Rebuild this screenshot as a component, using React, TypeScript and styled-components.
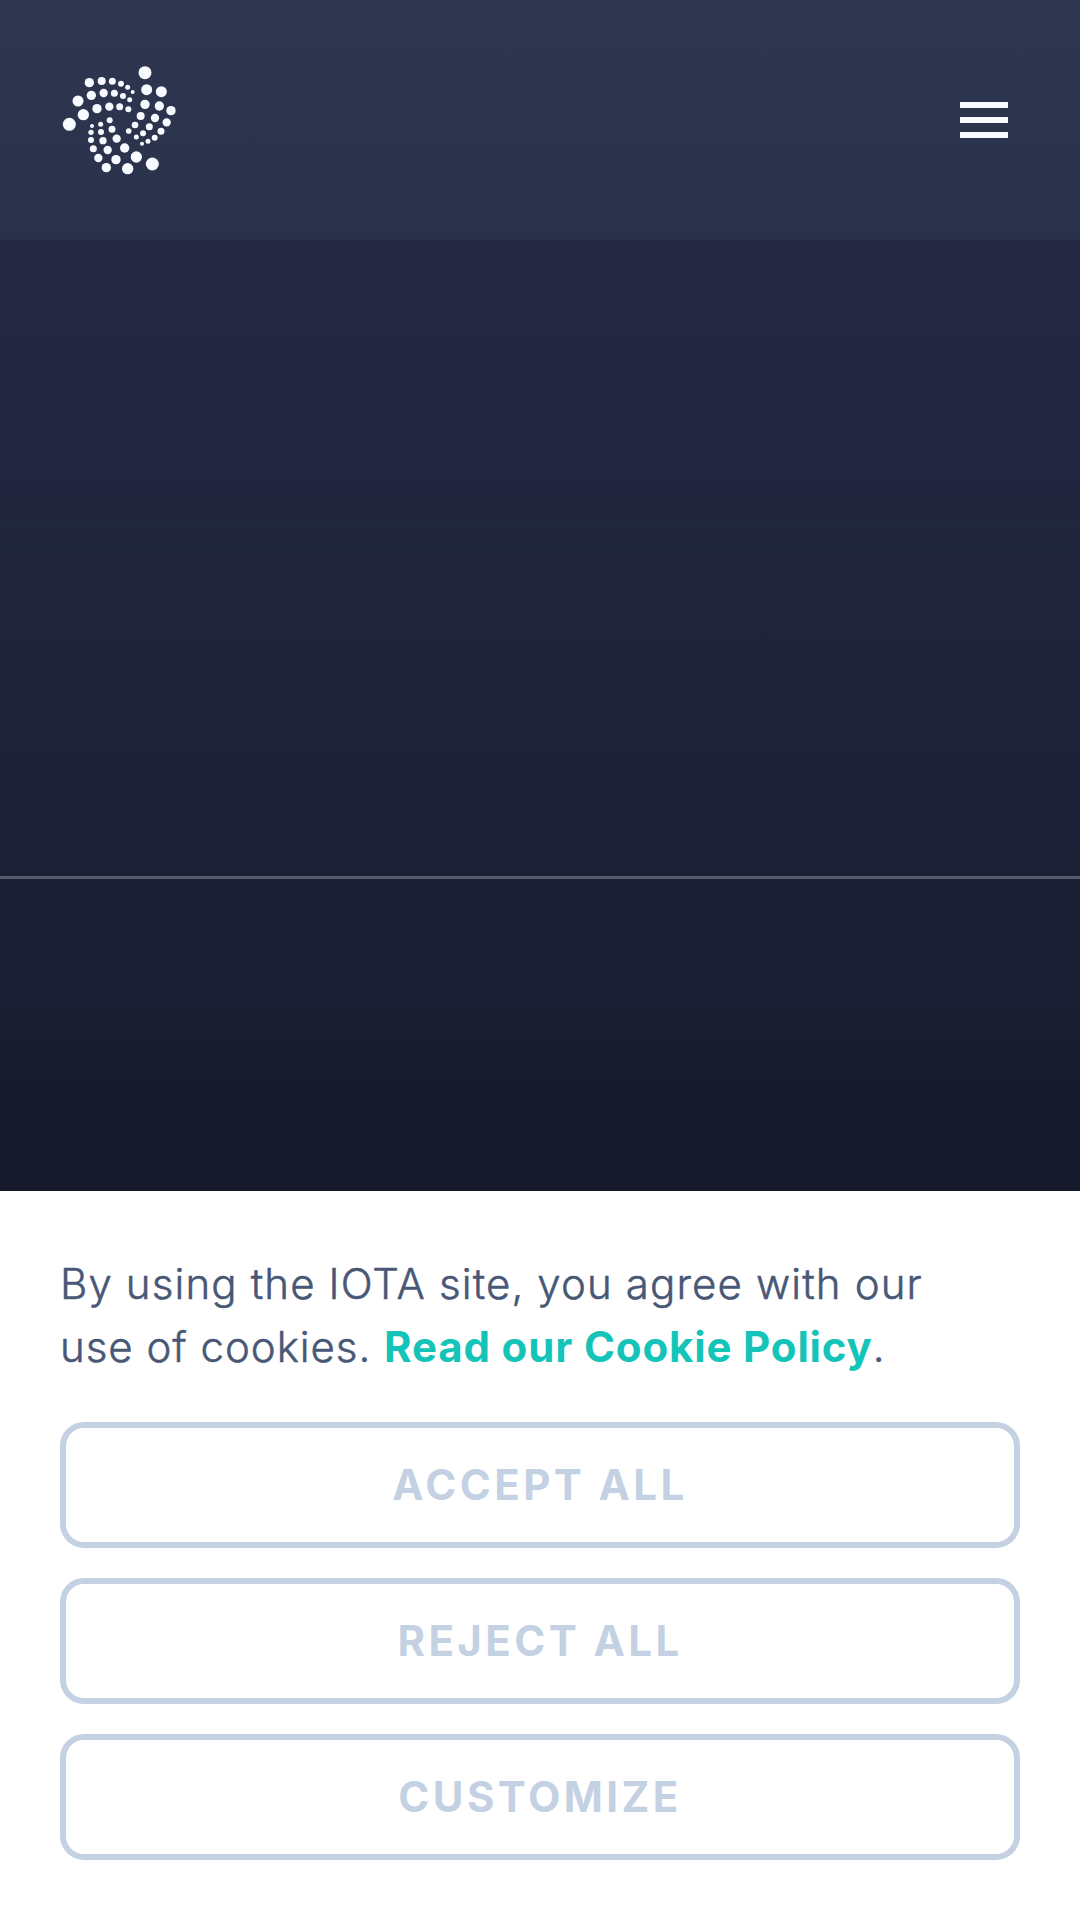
import React from "react";
import styled, { createGlobalStyle } from "styled-components";

const GlobalStyle = createGlobalStyle`
  *, *::before, *::after { box-sizing: border-box; }
  body { margin: 0; background: #fff; }
`;

const Page = styled.div`
  display: flex;
  flex-direction: column;
  width: 1080px;
  height: 1920px;
  overflow: hidden;
  font-family: Inter, "Liberation Sans", sans-serif;
`;

const Header = styled.header`
  display: flex;
  flex: none;
  align-items: center;
  justify-content: space-between;
  height: 240px;
  padding: 0 72px 0 60px;
  background: linear-gradient(#2e3650, #29314b);
`;

const Logo = styled.svg`
  display: block;
  width: 120px;
  height: 120px;
  fill: #f7faff;
`;

const MenuButton = styled.button`
  display: flex;
  flex-direction: column;
  gap: 9px;
  width: 48px;
  padding: 0;
  border: 0;
  background: none;
`;

const MenuBar = styled.span`
  height: 6px;
  background: #f7faff;
`;

const Hero = styled.main`
  flex: 1;
  background: linear-gradient(#242843 0, #212540 240px, #20263b 280px, #1c2137 580px, #1a1f33 760px, #151b2d 850px, #15192b 100%);
`;

const Divider = styled.hr`
  height: 3px;
  margin: 636px 0 0;
  border: 0;
  background: #565b6e;
`;

const CookiePanel = styled.section`
  display: flex;
  flex: none;
  flex-direction: column;
  gap: 30px;
  height: 729px;
  padding: 61px 60px 60px;
  background: #fff;
`;

const Notice = styled.p`
  margin: 0 0 14px;
  color: #485776;
  font-size: 42px;
  font-weight: 300;
  line-height: 63px;
  -webkit-text-stroke: 0.5px currentColor;
`;

const NoticeLine = styled.span<{ $tracking: number }>`
  display: block;
  letter-spacing: ${(p) => p.$tracking}px;
`;

const PolicyLink = styled.a`
  color: #14c4b8;
  font-weight: 700;
  letter-spacing: 0.84px;
  text-decoration: none;
  -webkit-text-stroke: 0;
`;

const ChoiceButton = styled.button`
  flex: none;
  height: 126px;
  padding: 0;
  border: 6px solid #c4d1e3;
  border-radius: 24px;
  background: #fff;
  color: #c4d1e3;
  font: 700 42px/54px Inter, "Liberation Sans", sans-serif;
  letter-spacing: 3.4px;
  text-transform: uppercase;
`;

const dots: [number, number, number][] = [
  [285, 68, 19.5], [290, 119, 16.5], [334, 125, 16.5], [285, 163, 14], [328, 168, 14], [363, 182, 14],
  [272, 198, 12], [315, 204, 12.5], [350, 217, 12.5], [255, 225, 10], [298, 230, 10.5], [333, 244, 10.5],
  [236, 243, 8.5], [279, 250, 9], [314, 263, 9], [259, 261, 7.5], [294, 274, 7.5], [276, 281, 6],
  [118, 98, 14], [155, 93, 12], [187, 94, 10.5], [213, 101, 9], [233, 112, 7.5], [248, 126, 6],
  [84, 153, 16.5], [124, 136, 14], [161, 129, 12.5], [193, 130, 10.5], [219, 138, 9], [239, 149, 7.5],
  [58, 223, 19.5], [100, 194, 17], [141, 176, 14], [178, 170, 12.5], [209, 170, 10.5], [235, 178, 9],
  [126, 228, 6], [152, 223, 7.5], [179, 211, 9],
  [123, 247, 8], [153, 246, 9], [186, 238, 10.5],
  [123, 270, 9], [159, 272, 11], [200, 266, 12.5],
  [130, 296, 10.5], [173, 300, 12.5], [224, 294, 14],
  [145, 324, 12.5], [198, 329, 14], [259, 321, 17],
  [169, 353, 14], [233, 356, 17], [307, 342, 19.5],
];

export default function App() {
  return (
    <Page>
      <GlobalStyle />
      <Header>
        <Logo viewBox="30 30 360 360" role="img" aria-label="IOTA">
          {dots.map(([x, y, r]) => (
            <circle key={`${x}-${y}`} cx={x} cy={y} r={r} />
          ))}
        </Logo>
        <MenuButton aria-label="Menu">
          <MenuBar />
          <MenuBar />
          <MenuBar />
        </MenuButton>
      </Header>
      <Hero>
        <Divider />
      </Hero>
      <CookiePanel>
        <Notice>
          <NoticeLine $tracking={1.13}>By using the IOTA site, you agree with our </NoticeLine>
          <NoticeLine $tracking={0.96}>
            use of cookies. <PolicyLink>Read our Cookie Policy</PolicyLink>.
          </NoticeLine>
        </Notice>
        <ChoiceButton>Accept all</ChoiceButton>
        <ChoiceButton>Reject all</ChoiceButton>
        <ChoiceButton>Customize</ChoiceButton>
      </CookiePanel>
    </Page>
  );
}
